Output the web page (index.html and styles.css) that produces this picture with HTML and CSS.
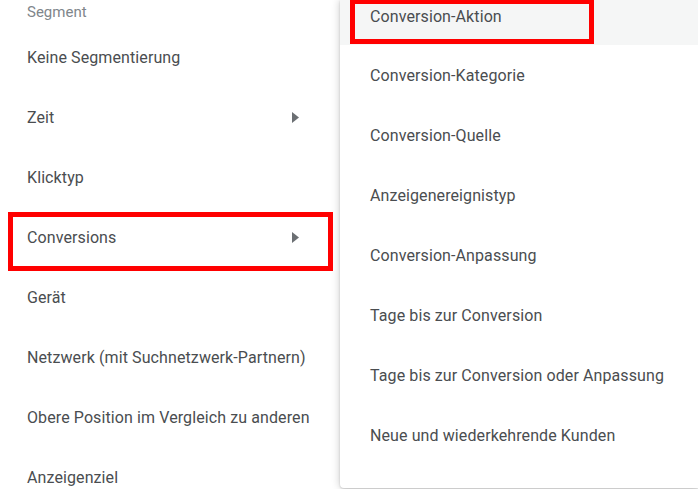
FILE: index.html
```html
<!DOCTYPE html>
<html lang="de">
<head>
<meta charset="utf-8">
<link rel="stylesheet" href="styles.css">
</head>
<body>
<div class="page">
  <div class="menu">
    <div class="menu-header">Segment</div>
    <div class="item">Keine Segmentierung</div>
    <div class="item">Zeit<svg class="arrow" width="7" height="11" viewBox="0 0 7 11"><path d="M0 0L7 5.5L0 11Z"/></svg></div>
    <div class="item">Klicktyp</div>
    <div class="item">Conversions<svg class="arrow" width="7" height="11" viewBox="0 0 7 11"><path d="M0 0L7 5.5L0 11Z"/></svg></div>
    <div class="item">Gerät</div>
    <div class="item">Netzwerk (mit Suchnetzwerk-Partnern)</div>
    <div class="item">Obere Position im Vergleich zu anderen</div>
    <div class="item">Anzeigenziel</div>
  </div>
  <div class="submenu">
    <div class="sub-list">
      <div class="sub-item active">Conversion-Aktion</div>
      <div class="sub-item">Conversion-Kategorie</div>
      <div class="sub-item">Conversion-Quelle</div>
      <div class="sub-item">Anzeigenereignistyp</div>
      <div class="sub-item">Conversion-Anpassung</div>
      <div class="sub-item">Tage bis zur Conversion</div>
      <div class="sub-item">Tage bis zur Conversion oder Anpassung</div>
      <div class="sub-item">Neue und wiederkehrende Kunden</div>
    </div>
  </div>
  <div class="mark mark-conversions"></div>
  <div class="mark mark-aktion"></div>
</div>
</body>
</html>
```
FILE: styles.css
```css
html, body {
  margin: 0;
  padding: 0;
  background: #ffffff;
}
body {
  font-family: Roboto, "Noto Sans", Arial, sans-serif;
  color: #4a4d50;
  overflow: hidden;
}
.page {
  position: relative;
  display: flex;
  width: 698px;
  height: 489px;
  overflow: hidden;
}
.menu {
  width: 340px;
  flex: 0 0 340px;
  background: #fff;
}
.menu-header {
  height: 27px;
  line-height: 25px;
  padding-left: 27px;
  font-size: 15px;
  color: #80868b;
}
.item {
  height: 60px;
  display: flex;
  align-items: center;
  justify-content: space-between;
  padding-left: 27px;
  padding-right: 41px;
  padding-top: 1px;
  box-sizing: border-box;
  font-size: 16px;
  letter-spacing: 0.1px;
  color: #4a4d50;
  white-space: nowrap;
}
.arrow {
  fill: #6b6f73;
  display: block;
  margin-top: -1px;
}
.submenu {
  flex: 1;
  height: 488px;
  background: #fff;
  border-bottom-left-radius: 4px;
  box-shadow: 0 0 8px rgba(0, 0, 0, 0.22), 0 1px 2px rgba(0, 0, 0, 0.15);
  position: relative;
  z-index: 1;
  overflow: hidden;
}
.sub-list {
  margin-top: -14px;
}
.sub-item {
  height: 60px;
  display: flex;
  align-items: center;
  padding-left: 30px;
  padding-top: 1px;
  box-sizing: border-box;
  font-size: 16px;
  letter-spacing: 0.1px;
  color: #4a4d50;
  white-space: nowrap;
}
.sub-item.active {
  height: 59px;
  background: #f5f6f6;
}
.mark {
  position: absolute;
  border: 5px solid #ff0000;
  box-sizing: border-box;
  z-index: 2;
}
.mark-conversions {
  left: 8px;
  top: 212px;
  width: 325px;
  height: 59px;
}
.mark-aktion {
  left: 350px;
  top: -1px;
  width: 244px;
  height: 45px;
}
```
